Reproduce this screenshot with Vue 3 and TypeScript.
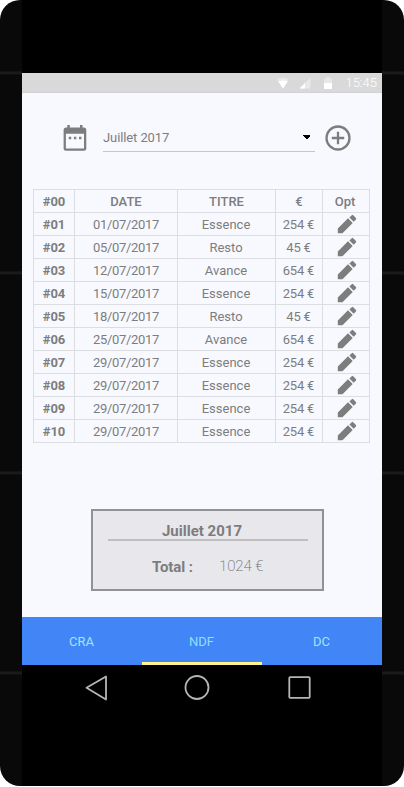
<script setup lang="ts">
interface Expense {
  id: string
  date: string
  title: string
  amount: string
}

const expenses: Expense[] = [
  { id: '#01', date: '01/07/2017', title: 'Essence', amount: '254 €' },
  { id: '#02', date: '05/07/2017', title: 'Resto', amount: '45 €' },
  { id: '#03', date: '12/07/2017', title: 'Avance', amount: '654 €' },
  { id: '#04', date: '15/07/2017', title: 'Essence', amount: '254 €' },
  { id: '#05', date: '18/07/2017', title: 'Resto', amount: '45 €' },
  { id: '#06', date: '25/07/2017', title: 'Avance', amount: '654 €' },
  { id: '#07', date: '29/07/2017', title: 'Essence', amount: '254 €' },
  { id: '#08', date: '29/07/2017', title: 'Essence', amount: '254 €' },
  { id: '#09', date: '29/07/2017', title: 'Essence', amount: '254 €' },
  { id: '#10', date: '29/07/2017', title: 'Essence', amount: '254 €' },
]

const tabs: string[] = ['CRA', 'NDF', 'DC']
const activeTab = 'NDF'
</script>

<template>
  <div class="phone">
    <div class="device">
      <header class="status">
        <svg class="wifi" width="14" height="12" viewBox="0 0 14 12">
          <path d="M1 2.6C4.500 .2 9.500 .2 13 2.600L7 11.500Z" fill="#fff" fill-opacity=".4" />
          <path d="M2.400 4.600C5.200 3 8.800 3 11.600 4.600L7 11.500Z" fill="#fff" />
        </svg>
        <svg class="signal" width="12" height="12" viewBox="0 0 12 12">
          <path d="M11.500 .5V11.500H.5Z" fill="#fff" fill-opacity=".4" />
          <path d="M6 6V11.500H.5Z" fill="#fff" />
        </svg>
        <svg class="battery" width="8" height="12" viewBox="0 0 8 12">
          <path d="M0 1.500H2V0H6V1.500H8V6H0Z" fill="#fff" fill-opacity=".4" />
          <path d="M0 6H8V12H0Z" fill="#fff" />
        </svg>
        <span class="clock">15:45</span>
      </header>

      <main class="content">
        <div class="toolbar">
          <svg class="calendar" width="24" height="28" viewBox="0 0 24 28">
            <path
              fill="#7d7d7d"
              fill-rule="evenodd"
              d="M4.300 1H6.800V3.500H17V1H19.500V3.500H20.800A2.500 2.500 0 0 1 23.300 6V24.300A2.500 2.500 0 0 1 20.800 26.800H3.100A2.500 2.500 0 0 1 .6 24.300V6A2.500 2.500 0 0 1 3.100 3.500H4.300ZM2.900 9.700V24.500H21V9.700Z"
            />
            <path fill="#7d7d7d" d="M5.800 12.700H8.200V15.200H5.800ZM10.900 12.700H13.300V15.200H10.900ZM16 12.700H18.400V15.200H16Z" />
          </svg>
          <div class="select">
            <span>Juillet 2017</span>
            <svg width="7" height="4" viewBox="0 0 7 4" shape-rendering="crispEdges">
              <path d="M0 0H7V1L4 4H3L0 1Z" fill="#000" />
            </svg>
          </div>
          <svg class="add" width="26" height="26" viewBox="0 0 26 26" fill="none" stroke="#7d7d7d" stroke-width="2.300">
            <circle cx="13" cy="13" r="11.500" />
            <path d="M13 6.800V19.200M6.800 13H19.200" />
          </svg>
        </div>

        <table class="expenses">
          <colgroup>
            <col class="c-id" /><col class="c-date" /><col class="c-title" /><col class="c-amount" /><col class="c-opt" />
          </colgroup>
          <thead>
            <tr>
              <th class="id">#00</th>
              <th>DATE</th>
              <th>TITRE</th>
              <th>€</th>
              <th class="opt-head">Opt</th>
            </tr>
          </thead>
          <tbody>
            <tr v-for="item in expenses" :key="item.id">
              <th class="id">{{ item.id }}</th>
              <td class="date">{{ item.date }}</td>
              <td class="title">{{ item.title }}</td>
              <td class="amount">{{ item.amount }}</td>
              <td class="opt">
                <svg width="24" height="22" viewBox="0 1 24 22">
                  <path
                    fill="#7d7d7d"
                    d="M2.800 16.500V21.200H7.500L17.700 11L13 6.300ZM20.900 7.400A1 1 0 0 0 20.900 6L18.200 3.200A1 1 0 0 0 16.800 3.200L14.400 5.400L18.700 9.700Z"
                  />
                </svg>
              </td>
            </tr>
          </tbody>
        </table>

        <section class="summary">
          <h2>Juillet 2017</h2>
          <p><strong>Total :</strong><span>1024 €</span></p>
        </section>
      </main>

      <nav class="tabs">
        <a v-for="tab in tabs" :key="tab" :class="{ active: tab === activeTab }">{{ tab }}</a>
      </nav>

      <footer class="system">
        <svg width="24" height="28" viewBox="0 0 24 28"><path d="M21 2.500V25.500L1.500 13.800Z" stroke-linejoin="round" /></svg>
        <svg class="home" width="26" height="28" viewBox="0 0 26 28"><circle cx="13" cy="13.500" r="11.500" /></svg>
        <svg width="24" height="28" viewBox="0 0 24 28"><rect x="1.300" y="3.200" width="20.400" height="20.600" rx=".8" /></svg>
      </footer>
    </div>
  </div>
</template>

<style>
body {
  background: #fff;
}
</style>

<style scoped>
.phone {
  box-sizing: border-box;
  width: 404px;
  height: 786px;
  padding: 0 22px;
  border-radius: 20px;
  overflow: hidden;
  background: repeating-linear-gradient(#090909 0 71px, #131313 71px 72px, #1a1a1a 72px 74px, #111 74px 75px, #090909 75px 200px);
  font-family: Roboto, sans-serif;
  font-size: 13px;
  color: #7d7d7d;
}
.device {
  box-sizing: border-box;
  height: 786px;
  padding-top: 73px;
  background: #000;
}
.status {
  box-sizing: border-box;
  display: flex;
  align-items: center;
  height: 20px;
  padding: 0 5px 0 254px;
  background: #d9d9d9;
  border-bottom: 1px solid #d2d2d4;
  color: #fff;
}
.signal {
  margin-left: 9px;
}
.battery {
  margin-left: 13px;
}
.clock {
  margin-left: auto;
  font-size: 13px;
  font-weight: 300;
}
.content {
  box-sizing: border-box;
  height: 524px;
  padding: 31px 0 0 11px;
  background: #f8f9ff;
}
.toolbar {
  display: flex;
  align-items: flex-start;
  height: 65px;
  padding-left: 30px;
}
.select {
  box-sizing: border-box;
  display: flex;
  align-items: center;
  justify-content: space-between;
  width: 212px;
  height: 28px;
  margin-left: 16px;
  padding: 0 5px 1px 0;
  border-bottom: 1px solid #c4c5c9;
  letter-spacing: -0.1px;
}
.add {
  margin: 1px 0 0 10px;
}
.expenses {
  width: 337px;
  table-layout: fixed;
  border-collapse: collapse;
}
.c-id { width: 41px; }
.c-date { width: 103px; }
.c-title { width: 98px; }
.c-amount { width: 47px; }
.c-opt { width: 47px; }
.expenses th,
.expenses td {
  box-sizing: border-box;
  height: 23px;
  padding: 2px 0 0;
  border: 1px solid #dcdde1;
  line-height: 18px;
  text-align: center;
}
.expenses th {
  font-weight: 500;
}
.expenses .id {
  font-weight: 700;
}
.expenses .date {
  letter-spacing: -0.3px;
}
.expenses .title {
  padding-right: 1px;
}
.expenses .amount {
  padding-right: 1px;
  letter-spacing: -0.2px;
}
.expenses .opt {
  padding: 0 0 0 2px;
  line-height: 0;
}
.expenses .opt-head {
  padding-right: 2px;
}
.summary {
  box-sizing: border-box;
  width: 233px;
  height: 82px;
  margin: 66px 0 0 58px;
  padding: 10px 14px 0 15px;
  border: 2px solid #929196;
  background: #e8e7eb;
}
.summary h2 {
  box-sizing: border-box;
  height: 20px;
  margin: 0;
  padding-right: 12px;
  border-bottom: 2px solid #bfbfbf;
  font-size: 15px;
  font-weight: 700;
  line-height: 20px;
  text-align: center;
}
.summary p {
  display: flex;
  margin: 15px 0 0;
  padding-left: 44px;
  font-size: 15px;
  line-height: 22px;
}
.summary strong {
  width: 67px;
  font-weight: 700;
  letter-spacing: -0.1px;
}
.summary span {
  font-weight: 200;
  line-height: 20px;
  letter-spacing: -0.1px;
  color: #6c6c6c;
}
.tabs {
  display: flex;
  height: 48px;
  background: #4285f6;
}
.tabs a {
  box-sizing: border-box;
  flex: 1;
  padding: 3px 1px 0 0;
  border-bottom: 3px solid transparent;
  color: #a0e4f5;
  line-height: 44px;
  text-align: center;
}
.tabs .active {
  border-bottom-color: #fff58a;
  color: #8ae0f8;
}
.system {
  display: flex;
  justify-content: space-between;
  padding: 9px 70px 0 63px;
}
.system svg {
  fill: none;
  stroke: #b5b5b5;
  stroke-width: 1.800;
}
.system .home {
  margin-right: 3px;
}
</style>
